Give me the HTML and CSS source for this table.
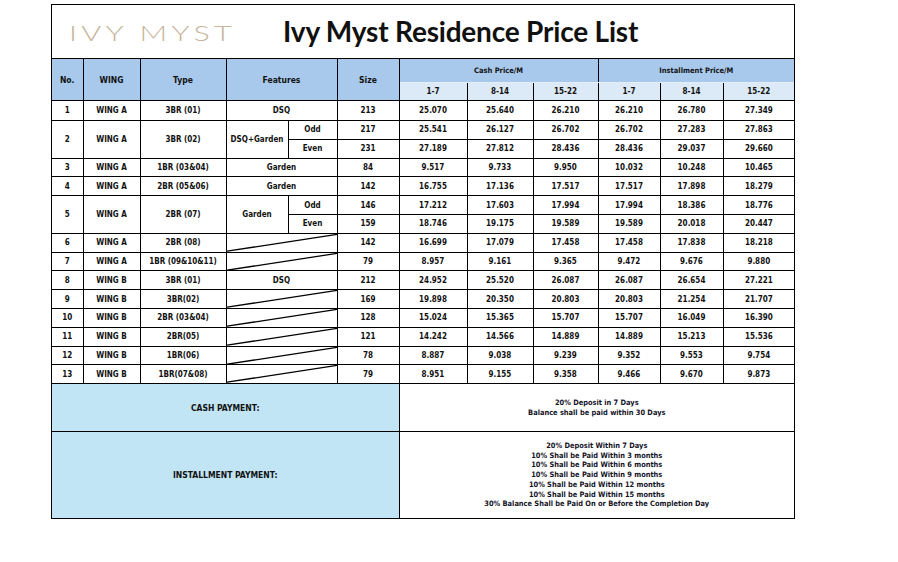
FILE: index.html
```html
<!DOCTYPE html>
<html lang="en">
<head>
<meta charset="utf-8">
<title>Ivy Myst Residence Price List</title>
<link rel="stylesheet" href="styles.css">
</head>
<body>
<div class="sheet">
  <div class="title-bar">
    <div class="logo-box"><div class="logo">IVY MYST</div></div>
    <h1 class="title">Ivy Myst Residence Price List</h1>
  </div>
  <table class="prices">
    <colgroup>
      <col class="c-no"><col class="c-wing"><col class="c-type"><col class="c-feat"><col class="c-sub"><col class="c-size">
      <col class="c-p1"><col class="c-p2"><col class="c-p3"><col class="c-p4"><col class="c-p5"><col class="c-p6">
    </colgroup>
    <thead>
      <tr class="head-top">
        <th rowspan="2">No.</th>
        <th rowspan="2">WING</th>
        <th rowspan="2">Type</th>
        <th rowspan="2" colspan="2">Features</th>
        <th rowspan="2">Size</th>
        <th colspan="3" class="group">Cash Price/M</th>
        <th colspan="3" class="group">Installment Price/M</th>
      </tr>
      <tr class="head-sub">
        <th>1-7</th><th>8-14</th><th>15-22</th>
        <th>1-7</th><th>8-14</th><th>15-22</th>
      </tr>
    </thead>
    <tbody>
      <tr class="first">
        <td>1</td><td>WING A</td><td>3BR (01)</td><td colspan="2">DSQ</td><td>213</td>
        <td>25.070</td><td>25.640</td><td>26.210</td><td>26.210</td><td>26.780</td><td>27.349</td>
      </tr>
      <tr>
        <td rowspan="2">2</td><td rowspan="2">WING A</td><td rowspan="2">3BR (02)</td><td rowspan="2">DSQ+Garden</td><td>Odd</td><td>217</td>
        <td>25.541</td><td>26.127</td><td>26.702</td><td>26.702</td><td>27.283</td><td>27.863</td>
      </tr>
      <tr>
        <td>Even</td><td>231</td>
        <td>27.189</td><td>27.812</td><td>28.436</td><td>28.436</td><td>29.037</td><td>29.660</td>
      </tr>
      <tr>
        <td>3</td><td>WING A</td><td>1BR (03&amp;04)</td><td colspan="2">Garden</td><td>84</td>
        <td>9.517</td><td>9.733</td><td>9.950</td><td>10.032</td><td>10.248</td><td>10.465</td>
      </tr>
      <tr>
        <td>4</td><td>WING A</td><td>2BR (05&amp;06)</td><td colspan="2">Garden</td><td>142</td>
        <td>16.755</td><td>17.136</td><td>17.517</td><td>17.517</td><td>17.898</td><td>18.279</td>
      </tr>
      <tr>
        <td rowspan="2">5</td><td rowspan="2">WING A</td><td rowspan="2">2BR (07)</td><td rowspan="2">Garden</td><td>Odd</td><td>146</td>
        <td>17.212</td><td>17.603</td><td>17.994</td><td>17.994</td><td>18.386</td><td>18.776</td>
      </tr>
      <tr>
        <td>Even</td><td>159</td>
        <td>18.746</td><td>19.175</td><td>19.589</td><td>19.589</td><td>20.018</td><td>20.447</td>
      </tr>
      <tr>
        <td>6</td><td>WING A</td><td>2BR (08)</td>
        <td colspan="2" class="slash"><svg class="slash-line" viewBox="0 0 110 18" preserveAspectRatio="none"><line x1="0" y1="17.4" x2="110" y2="0.4"/></svg></td><td>142</td>
        <td>16.699</td><td>17.079</td><td>17.458</td><td>17.458</td><td>17.838</td><td>18.218</td>
      </tr>
      <tr>
        <td>7</td><td>WING A</td><td>1BR (09&amp;10&amp;11)</td>
        <td colspan="2" class="slash"><svg class="slash-line" viewBox="0 0 110 18" preserveAspectRatio="none"><line x1="0" y1="17.4" x2="110" y2="0.4"/></svg></td><td>79</td>
        <td>8.957</td><td>9.161</td><td>9.365</td><td>9.472</td><td>9.676</td><td>9.880</td>
      </tr>
      <tr>
        <td>8</td><td>WING B</td><td>3BR (01)</td><td colspan="2">DSQ</td><td>212</td>
        <td>24.952</td><td>25.520</td><td>26.087</td><td>26.087</td><td>26.654</td><td>27.221</td>
      </tr>
      <tr>
        <td>9</td><td>WING B</td><td>3BR(02)</td>
        <td colspan="2" class="slash"><svg class="slash-line" viewBox="0 0 110 18" preserveAspectRatio="none"><line x1="0" y1="17.4" x2="110" y2="0.4"/></svg></td><td>169</td>
        <td>19.898</td><td>20.350</td><td>20.803</td><td>20.803</td><td>21.254</td><td>21.707</td>
      </tr>
      <tr>
        <td>10</td><td>WING B</td><td>2BR (03&amp;04)</td>
        <td colspan="2" class="slash"><svg class="slash-line" viewBox="0 0 110 18" preserveAspectRatio="none"><line x1="0" y1="17.4" x2="110" y2="0.4"/></svg></td><td>128</td>
        <td>15.024</td><td>15.365</td><td>15.707</td><td>15.707</td><td>16.049</td><td>16.390</td>
      </tr>
      <tr>
        <td>11</td><td>WING B</td><td>2BR(05)</td>
        <td colspan="2" class="slash"><svg class="slash-line" viewBox="0 0 110 18" preserveAspectRatio="none"><line x1="0" y1="17.4" x2="110" y2="0.4"/></svg></td><td>121</td>
        <td>14.242</td><td>14.566</td><td>14.889</td><td>14.889</td><td>15.213</td><td>15.536</td>
      </tr>
      <tr>
        <td>12</td><td>WING B</td><td>1BR(06)</td>
        <td colspan="2" class="slash"><svg class="slash-line" viewBox="0 0 110 18" preserveAspectRatio="none"><line x1="0" y1="17.4" x2="110" y2="0.4"/></svg></td><td>78</td>
        <td>8.887</td><td>9.038</td><td>9.239</td><td>9.352</td><td>9.553</td><td>9.754</td>
      </tr>
      <tr>
        <td>13</td><td>WING B</td><td>1BR(07&amp;08)</td>
        <td colspan="2" class="slash"><svg class="slash-line" viewBox="0 0 110 18" preserveAspectRatio="none"><line x1="0" y1="17.4" x2="110" y2="0.4"/></svg></td><td>79</td>
        <td>8.951</td><td>9.155</td><td>9.358</td><td>9.466</td><td>9.670</td><td>9.873</td>
      </tr>
    </tbody>
    <tfoot>
      <tr class="pay-cash">
        <th colspan="6" class="pay-label">CASH PAYMENT:</th>
        <td colspan="6" class="pay-terms">20% Deposit in 7 Days<br>Balance shall be paid within 30 Days</td>
      </tr>
      <tr class="pay-inst">
        <th colspan="6" class="pay-label">INSTALLMENT PAYMENT:</th>
        <td colspan="6" class="pay-terms">20% Deposit Within 7 Days<br>10% Shall be Paid Within 3 months<br>10% Shall be Paid Within 6 months<br>10% Shall be Paid Within 9 months<br>10% Shall be Paid Within 12 months<br>10% Shall be Paid Within 15 months<br>30% Balance Shall be Paid On or Before the Completion Day</td>
      </tr>
    </tfoot>
  </table>
</div>
</body>
</html>
```

FILE: styles.css
```css
html, body {
  margin: 0;
  padding: 0;
  background: #ffffff;
}

body {
  font-family: "DejaVu Sans Condensed", "DejaVu Sans", sans-serif;
  color: #111111;
}

.sheet {
  margin: 4px 0 0 51px;
  width: 744px;
  box-sizing: border-box;
  border: 1px solid #000;
}

.title-bar {
  display: flex;
  align-items: center;
  height: 54px;
  box-sizing: border-box;
  border-bottom: 1px solid #000;
  padding-left: 17px;
}

.logo-box {
  width: 214px;
  flex: none;
}

.logo {
  font-family: "Lato", "Open Sans", sans-serif;
  font-weight: 300;
  font-size: 21px;
  letter-spacing: 3px;
  color: #c6b59c;
  white-space: nowrap;
  transform: scaleX(1.45);
  transform-origin: left center;
  padding-top: 2px;
}

.title {
  margin: 0;
  font-family: "Lato", "Open Sans", sans-serif;
  font-weight: 700;
  font-size: 28px;
  letter-spacing: -0.2px;
  color: #111;
  padding-bottom: 2px;
}

.prices {
  width: 100%;
  border-collapse: collapse;
  table-layout: fixed;
  border-style: hidden;
  font-size: 8px;
  font-weight: bold;
  font-stretch: condensed;
}

.c-no { width: 31px; }
.c-wing { width: 57px; }
.c-type { width: 86px; }
.c-feat { width: 62px; }
.c-sub { width: 49px; }
.c-size { width: 62px; }
.c-p1 { width: 68px; }
.c-p2 { width: 66px; }
.c-p3 { width: 65px; }
.c-p4 { width: 62px; }
.c-p5 { width: 63px; }
.c-p6 { width: 71px; }

.prices th,
.prices td {
  border: 1px solid #000;
  padding: 0;
  text-align: center;
  vertical-align: middle;
  white-space: nowrap;
  overflow: hidden;
}

.prices thead th {
  background: #a8c9ec;
  font-size: 8.5px;
}

.head-top { height: 23px; }
.head-sub { height: 18.6px; }

.prices thead th.group {
  font-size: 7.5px;
  border-bottom-color: #e4edf8;
}

.prices .head-sub th {
  background: #dce9f7;
  font-size: 8px;
}

.prices tbody tr { height: 18.8px; }
.prices tbody tr.first { height: 20px; }

.prices td.slash {
  line-height: 0;
}

.slash-line {
  display: block;
  width: 100%;
  height: 17.8px;
}

.slash-line line {
  stroke: #000;
  stroke-width: 1.3;
  vector-effect: non-scaling-stroke;
}

.pay-cash { height: 48px; }
.pay-inst { height: 86px; }

.prices th.pay-label {
  background: #c2e5f5;
  font-size: 8.5px;
}

.prices td.pay-terms {
  font-size: 7.4px;
  line-height: 9.8px;
  color: #141428;
}
```
